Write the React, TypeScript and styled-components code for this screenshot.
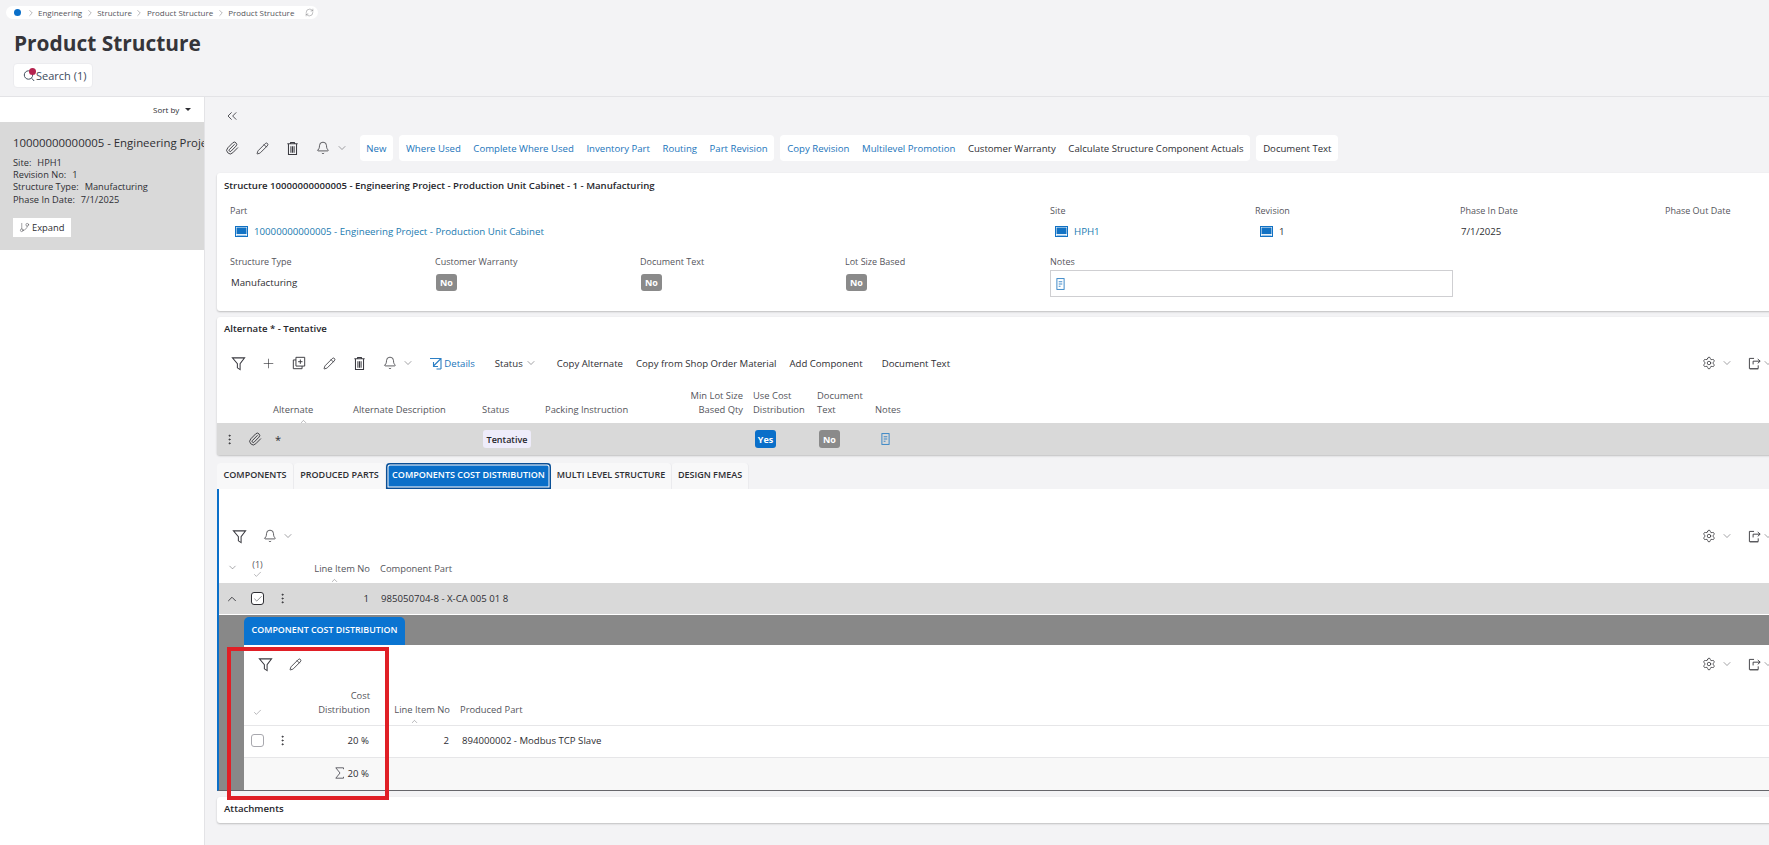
import React from "react";
import styled, { createGlobalStyle } from "styled-components";
import { ChevronDown, ChevronRight, ChevronUp, ChevronsLeft, EllipsisVertical, Paperclip, Pencil, Plus, Settings, Bell, Check, RefreshCw, GitBranch } from "lucide-react";

const GlobalStyle = createGlobalStyle`
  html, body { margin: 0; padding: 0; background: #f3f3f5; }
  body { font-family: "Open Sans", "Liberation Sans", sans-serif; color: #2e2e33; }
`;

/* ---- drawings ---- */
const Funnel = () => (
  <svg width="15" height="15" viewBox="0 0 16 16" fill="none" stroke="#3a3a40" strokeWidth="1.1">
    <path d="M1.5 2h13L9.7 8.2v6.3L6.8 12.6V8.2z" />
  </svg>
);

const Trash = () => (
  <svg width="15" height="15" viewBox="0 0 16 16" fill="none" stroke="#3a3a40" strokeWidth="1.1">
    <path d="M2.5 3h11M6 3V1.5h4V3M3.7 3v11.5h8.6V3M6.3 5.5v7M8 5.5v7M9.7 5.5v7" />
  </svg>
);

const Duplicate = () => (
  <svg width="14" height="14" viewBox="0 0 16 16" fill="none" stroke="#3a3a40" strokeWidth="1.1">
    <path d="M4.5 1.5h10v10h-10zM4.5 4.5h-3v10h10v-3M9.5 4v5M7 6.5h5" />
  </svg>
);

const ShareOut = () => (
  <svg width="13" height="13" viewBox="0 0 14 14" fill="none" stroke="#3a3a40" strokeWidth="1">
    <path d="M6.5 1.5h-5v11h9.5V9" />
    <path d="M5.5 8V4.5h7.5M10.5 2.2l2.6 2.3-2.6 2.3" />
    <path d="M2 13.5h9" stroke="#aaa" />
  </svg>
);

const ScreenLink = () => (
  <svg width="13" height="11" viewBox="0 0 13 11">
    <rect x="0.5" y="0.5" width="12" height="10" fill="#fff" stroke="#1272c4" />
    <rect x="1.5" y="1.5" width="10" height="6.5" fill="#1272c4" />
    <rect x="1.5" y="8.8" width="10" height="1" fill="#7fb4e2" />
  </svg>
);

const NoteDoc = () => (
  <svg width="9" height="12" viewBox="0 0 10 13" fill="none" stroke="#2c7fc4">
    <rect x="1" y="0.5" width="8" height="12" />
    <path d="M3 4h4M3 6.5h4M3 9h2" />
  </svg>
);

const OpenLink = () => (
  <svg width="13" height="13" viewBox="0 0 13 13" fill="none" stroke="#2c7fc4" strokeWidth="1.1">
    <path d="M1 1.5h4M12 12V1.5H5M11.5 2L4.5 9M4.5 5v4.5H9M12 12H7.5" />
  </svg>
);

const Sigma = () => (
  <svg width="9" height="12" viewBox="0 0 9 12" fill="none" stroke="#55555c" strokeWidth="0.9">
    <path d="M8.5 2.2V.8H.8L5 6 .8 11.2h7.7V9.8" />
  </svg>
);

const SearchMark = () => (
  <SearchIcon>
    <svg width="12" height="13" viewBox="0 0 12 13" fill="none" stroke="#44505e" strokeWidth="1">
      <circle cx="5.5" cy="6" r="4.2" />
      <path d="M8.6 9.2l2.6 2.8" />
    </svg>
    <Dot />
  </SearchIcon>
);

/* ---- page frame ---- */
const Page = styled.div`
  width: 1769px;
  height: 845px;
  overflow: hidden;
  display: flex;
  flex-direction: column;
`;

const Header = styled.header`
  height: 97px;
  flex: none;
  padding: 6px 0 0 6px;
  box-sizing: border-box;
  border-bottom: 1px solid #e3e3e6;
`;

const Breadcrumb = styled.nav`
  height: 13px;
  width: 312px;
  box-sizing: border-box;
  padding-left: 8px;
  background: #fff;
  border-radius: 7px;
  display: flex;
  align-items: center;
  font-size: 8px;
  color: #55555c;
  svg { flex: none; }
`;

const Crumb = styled.span`
  white-space: nowrap;
`;

const CrumbDot = styled.span`
  width: 7px;
  height: 7px;
  flex: none;
  border-radius: 50%;
  background: #0a6fc9;
  margin-right: 2px;
`;

const Title = styled.h1`
  margin: 10px 0 0 8px;
  font-size: 20.9px;
  line-height: 28px;
  font-weight: 700;
  color: #35353a;
`;

const SearchButton = styled.button`
  margin: 6px 0 0 7px;
  width: 80px;
  height: 25px;
  padding: 0 0 0 9px;
  border: 1px solid #ececef;
  border-radius: 4px;
  background: #fff;
  display: flex;
  align-items: center;
  white-space: nowrap;
  font: 400 11px "Open Sans", sans-serif;
  color: #3c4a5c;
`;

const SearchIcon = styled.span`
  position: relative;
  width: 13px;
  height: 14px;
  flex: none;
  display: inline-flex;
`;

const Dot = styled.span`
  position: absolute;
  top: -1px;
  left: 6px;
  width: 7px;
  height: 7px;
  border-radius: 50%;
  background: #b5234f;
`;

const Body = styled.div`
  flex: 1;
  min-height: 0;
  display: flex;
`;

/* ---- left list ---- */
const Sidebar = styled.aside`
  width: 205px;
  flex: none;
  background: #fff;
  border-right: 1px solid #e3e3e6;
  box-sizing: border-box;
  overflow: hidden;
`;

const SortRow = styled.div`
  height: 25px;
  padding: 6px 8px 0 0;
  box-sizing: border-box;
  display: flex;
  justify-content: flex-end;
`;

const SortBy = styled.span`
  width: 49px;
  height: 13px;
  font-size: 8px;
  line-height: 12px;
  padding-left: 6px;
  box-sizing: border-box;
  display: flex;
  align-items: center;
  gap: 6px;
  &::after {
    content: "";
    border-left: 3px solid transparent;
    border-right: 3px solid transparent;
    border-top: 3.5px solid #2e2e33;
  }
`;

const ListItem = styled.div`
  height: 128px;
  background: #d9d9d9;
  padding: 13px 0 0 13px;
  box-sizing: border-box;
`;

const ItemTitle = styled.div`
  font-size: 11.4px;
  line-height: 16px;
  white-space: nowrap;
  margin-bottom: 6px;
`;

const ItemLine = styled.div`
  font-size: 9.25px;
  line-height: 12.2px;
  white-space: nowrap;
  span { margin-left: 6px; }
`;

const ExpandButton = styled.div`
  width: 58px;
  height: 19px;
  margin-top: 12px;
  background: #fff;
  display: flex;
  align-items: center;
  gap: 2px;
  padding-left: 6px;
  box-sizing: border-box;
  font-size: 9.4px;
`;

/* ---- main column ---- */
const Main = styled.main`
  flex: 1;
  min-width: 0;
  padding-left: 12px;
  overflow: hidden;
`;

const CollapseRow = styled.div`
  height: 38px;
  display: flex;
  align-items: center;
  padding: 0 0 1px 7px;
  box-sizing: border-box;
`;

const MainToolbar = styled.div`
  height: 26px;
  display: flex;
  align-items: stretch;
  white-space: nowrap;
`;

const IconSlot = styled.span`
  width: 30.4px;
  flex: none;
  display: inline-flex;
  align-items: center;
  justify-content: center;
`;

const ChevronSlot = styled.span<{ $pull?: number }>`
  width: 14px;
  flex: none;
  display: inline-flex;
  align-items: center;
  justify-content: center;
  margin-left: ${(p) => p.$pull ?? -4}px;
`;

const ToolGroup = styled.div<{ $ml?: number }>`
  background: #fff;
  border-radius: 4px;
  display: flex;
  align-items: center;
  padding: 0 0.5px;
  margin-left: ${(p) => p.$ml ?? 6}px;
`;

const ToolLink = styled.span<{ $plain?: boolean }>`
  font-size: 9.6px;
  padding: 0 6.3px;
  color: ${(p) => (p.$plain ? "#2e2e33" : "#1b75bb")};
`;

const Card = styled.section<{ $mt?: number; $h: number }>`
  margin: ${(p) => p.$mt ?? 6}px -20px 0 0;
  height: ${(p) => p.$h}px;
  background: #fff;
  border-radius: 3px;
  box-shadow: 0 1px 2px rgba(0, 0, 0, 0.22);
  position: relative;
`;

const CardTitle = styled.h2<{ $top?: number }>`
  margin: 0;
  padding: ${(p) => p.$top ?? 6}px 0 0 7px;
  height: 20px;
  box-sizing: border-box;
  font-size: 9.6px;
  line-height: 14px;
  font-weight: 600;
  color: #26262b;
`;

const FieldGrid = styled.div`
  margin-top: 11px;
  padding-left: 13px;
  display: grid;
  grid-template-columns: repeat(8, 205px);
  row-gap: 14px;
`;

const Field = styled.div<{ $span?: number }>`
  grid-column: span ${(p) => p.$span ?? 1};
  min-width: 0;
`;

const FieldLabel = styled.div`
  font-size: 9px;
  line-height: 14px;
  color: #55555c;
  white-space: nowrap;
`;

const FieldValue = styled.div<{ $tall?: boolean; $plain?: boolean }>`
  height: ${(p) => (p.$tall ? 27 : 20)}px;
  margin-top: ${(p) => (p.$tall ? 1 : 3)}px;
  padding-left: ${(p) => (p.$tall || p.$plain ? 1 : 5)}px;
  display: flex;
  align-items: center;
  gap: 6px;
  font-size: 9.7px;
  white-space: nowrap;
  & > span { margin-bottom: ${(p) => (p.$tall ? 2 : 0)}px; }
`;

const LinkText = styled.span`
  color: #1a7ab0;
`;

const Badge = styled.span<{ $kind: "no" | "yes" | "status" }>`
  height: 17.5px;
  padding: 0 ${(p) => (p.$kind === "status" ? 5 : 0)}px;
  width: ${(p) => (p.$kind === "status" ? "48px" : "21px")};
  box-sizing: border-box;
  border-radius: 3px;
  display: inline-flex;
  align-items: center;
  justify-content: center;
  font-size: 9px;
  font-weight: ${(p) => (p.$kind === "status" ? 600 : 700)};
  color: ${(p) => (p.$kind === "status" ? "#26262b" : "#fff")};
  background: ${(p) => ({ no: "#8a8a8a", yes: "#0a6fc9", status: "#eeecfa" })[p.$kind]};
`;

const NotesInput = styled.div`
  width: 403px;
  height: 27px;
  margin-left: -1px;
  box-sizing: border-box;
  border: 1px solid #cfcfd2;
  display: flex;
  align-items: center;
  padding-left: 5px;
`;

const Toolbar = styled.div<{ $left?: number; $mt?: number }>`
  height: 30px;
  margin-top: ${(p) => p.$mt ?? 0}px;
  display: flex;
  align-items: center;
  padding: 0 0 0 ${(p) => p.$left ?? 6}px;
  white-space: nowrap;
`;

const ToolText = styled.span<{ $blue?: boolean; $ml?: number }>`
  font-size: 9.6px;
  margin-left: ${(p) => p.$ml ?? 0}px;
  color: ${(p) => (p.$blue ? "#1b75bb" : "#2e2e33")};
  display: inline-flex;
  align-items: center;
  gap: 2px;
`;

const RightTools = styled.div`
  margin-left: auto;
  margin-right: 6px;
  display: flex;
  align-items: center;
  width: 81px;
  flex: none;
  gap: 5px;
`;

const ShareSlot = styled.span`
  display: inline-flex;
  margin: 0 -4px 0 10px;
`;

/* ---- tables ---- */
const HeaderRow = styled.div<{ $cols: string; $h: number; $pb?: number }>`
  height: ${(p) => p.$h}px;
  display: grid;
  grid-template-columns: ${(p) => p.$cols};
  align-items: end;
  padding-bottom: ${(p) => p.$pb ?? 7}px;
  box-sizing: border-box;
`;

const HeadCell = styled.div<{ $right?: boolean }>`
  position: relative;
  font-size: 9.4px;
  line-height: 14px;
  color: #55555c;
  text-align: ${(p) => (p.$right ? "right" : "left")};
  padding: 0 ${(p) => (p.$right ? 5 : 0)}px 0 ${(p) => (p.$right ? 0 : 5)}px;
  white-space: nowrap;
`;

const SortCaret = styled.span<{ $x: number }>`
  position: absolute;
  left: ${(p) => p.$x}px;
  bottom: -9px;
  display: flex;
`;

const Row = styled.div<{ $cols: string; $h: number; $bg?: string; $line?: boolean; $up?: number }>`
  height: ${(p) => p.$h}px;
  display: grid;
  grid-template-columns: ${(p) => p.$cols};
  align-items: center;
  box-sizing: border-box;
  padding-bottom: ${(p) => p.$up ?? 0}px;
  background: ${(p) => p.$bg ?? "transparent"};
  border-top: ${(p) => (p.$line ? "1px solid #e6e6e8" : "none")};
`;

const Cell = styled.div<{ $right?: boolean; $center?: boolean; $left?: number }>`
  font-size: 9.6px;
  white-space: nowrap;
  display: flex;
  align-items: center;
  justify-content: ${(p) => (p.$right ? "flex-end" : p.$center ? "center" : "flex-start")};
  padding: 0 ${(p) => (p.$right ? 6 : 0)}px 0 ${(p) => (p.$right || p.$center ? 0 : p.$left ?? 7)}px;
`;

const MenuCell = styled(Cell)`
  gap: 12px;
`;

const SumCell = styled(Cell)`
  gap: 4px;
`;

const Star = styled(Cell)`
  font-size: 11px;
`;

const SelectHead = styled.div<{ $drop?: number }>`
  display: flex;
  flex-direction: column;
  align-items: center;
  font-size: 9px;
  line-height: 11px;
  color: #55555c;
  margin-bottom: ${(p) => -(p.$drop ?? 0)}px;
`;

const Tabs = styled.div`
  margin-top: 8px;
  height: 26px;
  display: flex;
`;

const Tab = styled.div<{ $w: number; $active?: boolean }>`
  width: ${(p) => p.$w}px;
  box-sizing: border-box;
  display: flex;
  align-items: center;
  justify-content: center;
  padding-bottom: 3px;
  font-size: 9px;
  font-weight: 600;
  white-space: nowrap;
  border-radius: 4px 4px 0 0;
  color: ${(p) => (p.$active ? "#fff" : "#2e2e33")};
  background: ${(p) => (p.$active ? "#0a6fc9" : "#f8f8f9")};
  border-right: ${(p) => (p.$active ? "none" : "1px solid #ebebee")};
  box-shadow: ${(p) => (p.$active ? "inset 0 0 0 1.5px #0a4f96, inset 0 0 0 2.5px #fff" : "none")};
`;

const Panel = styled.div`
  height: 302px;
  margin-right: -20px;
  background: #fff;
  border-left: 2px solid #0a6fc9;
  border-bottom: 1px solid #66666b;
  box-sizing: border-box;
  padding-top: 32px;
`;

const Band = styled.div`
  height: 30px;
  margin-top: 1px;
  background: #888;
  padding: 2px 0 0 25px;
  box-sizing: border-box;
`;

const BandTab = styled.div`
  width: 161px;
  height: 28px;
  padding-bottom: 3px;
  box-sizing: border-box;
  background: #0a74d1;
  border-radius: 5px 5px 0 0;
  color: #fff;
  font-size: 8.9px;
  font-weight: 600;
  display: flex;
  align-items: center;
  justify-content: center;
  white-space: nowrap;
`;

const Nested = styled.div`
  height: 145px;
  background: #fff;
  margin-left: 25px;
  box-shadow: -25px 0 0 #888;
  padding-top: 4px;
  box-sizing: border-box;
`;

const CheckBox = styled.span<{ $on?: boolean }>`
  width: 13px;
  height: 13px;
  box-sizing: border-box;
  border-radius: 3px;
  border: 1px solid ${(p) => (p.$on ? "#2e2e33" : "#a8a8ae")};
  background: #fff;
  display: inline-flex;
  align-items: center;
  justify-content: center;
`;

const RedFrame = styled.div`
  position: absolute;
  left: 227px;
  top: 647px;
  width: 162px;
  height: 153px;
  box-sizing: border-box;
  border: 4px solid #e01f26;
  pointer-events: none;
`;

const Shell = styled.div`
  position: relative;
`;

const thin = { strokeWidth: 1.5, color: "#2e2e34" };
const tiny = { strokeWidth: 1, color: "#44444a" };

const altCols = "51px 80px 129px 63px 100px 108px 64px 58px 1fr";
const compCols = "26px 25px 25px 80px 1fr";
const prodCols = "26px 25px 80px 80px 1fr";

const Sep = () => <ChevronRight size={10} strokeWidth={1} color="#55555c" style={{ margin: "0 2.5px" }} />;

const GridTools = () => (
  <RightTools>
    <Settings size={14} strokeWidth={1.3} color="#2e2e34" />
    <ChevronDown size={12} {...tiny} />
    <ShareSlot><ShareOut /></ShareSlot>
    <ChevronDown size={12} {...tiny} />
  </RightTools>
);

const App = () => {
  return (
    <Shell>
      <GlobalStyle />
      <Page>
        <Header>
          <Breadcrumb>
            <CrumbDot />
            <Sep />
            <Crumb>Engineering</Crumb>
            <Sep />
            <Crumb>Structure</Crumb>
            <Sep />
            <Crumb>Product Structure</Crumb>
            <Sep />
            <Crumb>Product Structure</Crumb>
            <RefreshCw size={9} strokeWidth={1} color="#55555c" style={{ marginLeft: 11 }} />
          </Breadcrumb>
          <Title>Product Structure</Title>
          <SearchButton>
            <SearchMark />
            Search (1)
          </SearchButton>
        </Header>
        <Body>
          <Sidebar>
            <SortRow>
              <SortBy>Sort by</SortBy>
            </SortRow>
            <ListItem>
              <ItemTitle>10000000000005 - Engineering Project - Production Unit Cabinet</ItemTitle>
              <ItemLine>Site:<span>HPH1</span></ItemLine>
              <ItemLine>Revision No:<span>1</span></ItemLine>
              <ItemLine>Structure Type:<span>Manufacturing</span></ItemLine>
              <ItemLine>Phase In Date:<span>7/1/2025</span></ItemLine>
              <ExpandButton>
                <GitBranch size={11} strokeWidth={1} color="#3a3a40" />
                Expand
              </ExpandButton>
            </ListItem>
          </Sidebar>
          <Main>
            <CollapseRow>
              <ChevronsLeft size={16} strokeWidth={1.3} color="#3a3a40" />
            </CollapseRow>
            <MainToolbar>
              <IconSlot><Paperclip size={14} {...thin} /></IconSlot>
              <IconSlot><Pencil size={13} {...thin} /></IconSlot>
              <IconSlot><Trash /></IconSlot>
              <IconSlot><Bell size={14} strokeWidth={1.3} color="#2e2e34" /></IconSlot>
              <ChevronSlot><ChevronDown size={12} {...tiny} /></ChevronSlot>
              <ToolGroup $ml={11}><ToolLink>New</ToolLink></ToolGroup>
              <ToolGroup>
                <ToolLink>Where Used</ToolLink>
                <ToolLink>Complete Where Used</ToolLink>
                <ToolLink>Inventory Part</ToolLink>
                <ToolLink>Routing</ToolLink>
                <ToolLink>Part Revision</ToolLink>
              </ToolGroup>
              <ToolGroup>
                <ToolLink>Copy Revision</ToolLink>
                <ToolLink>Multilevel Promotion</ToolLink>
                <ToolLink $plain>Customer Warranty</ToolLink>
                <ToolLink $plain>Calculate Structure Component Actuals</ToolLink>
              </ToolGroup>
              <ToolGroup><ToolLink $plain>Document Text</ToolLink></ToolGroup>
            </MainToolbar>

            <Card $mt={12} $h={138}>
              <CardTitle>Structure 10000000000005 - Engineering Project - Production Unit Cabinet - 1 - Manufacturing</CardTitle>
              <FieldGrid>
                <Field $span={4}>
                  <FieldLabel>Part</FieldLabel>
                  <FieldValue><ScreenLink /><LinkText>10000000000005 - Engineering Project - Production Unit Cabinet</LinkText></FieldValue>
                </Field>
                <Field>
                  <FieldLabel>Site</FieldLabel>
                  <FieldValue><ScreenLink /><LinkText>HPH1</LinkText></FieldValue>
                </Field>
                <Field>
                  <FieldLabel>Revision</FieldLabel>
                  <FieldValue><ScreenLink /><span>1</span></FieldValue>
                </Field>
                <Field>
                  <FieldLabel>Phase In Date</FieldLabel>
                  <FieldValue $plain>7/1/2025</FieldValue>
                </Field>
                <Field>
                  <FieldLabel>Phase Out Date</FieldLabel>
                </Field>
                <Field>
                  <FieldLabel>Structure Type</FieldLabel>
                  <FieldValue $tall><span>Manufacturing</span></FieldValue>
                </Field>
                <Field>
                  <FieldLabel>Customer Warranty</FieldLabel>
                  <FieldValue $tall><Badge $kind="no">No</Badge></FieldValue>
                </Field>
                <Field>
                  <FieldLabel>Document Text</FieldLabel>
                  <FieldValue $tall><Badge $kind="no">No</Badge></FieldValue>
                </Field>
                <Field>
                  <FieldLabel>Lot Size Based</FieldLabel>
                  <FieldValue $tall><Badge $kind="no">No</Badge></FieldValue>
                </Field>
                <Field $span={2}>
                  <FieldLabel>Notes</FieldLabel>
                  <FieldValue $tall><NotesInput><NoteDoc /></NotesInput></FieldValue>
                </Field>
              </FieldGrid>
            </Card>

            <Card $h={138}>
              <CardTitle $top={5}>Alternate * - Tentative</CardTitle>
              <Toolbar $mt={11}>
                <IconSlot><Funnel /></IconSlot>
                <IconSlot><Plus size={15} strokeWidth={1} color="#2e2e34" /></IconSlot>
                <IconSlot><Duplicate /></IconSlot>
                <IconSlot><Pencil size={13} {...thin} /></IconSlot>
                <IconSlot><Trash /></IconSlot>
                <IconSlot><Bell size={14} strokeWidth={1.3} color="#2e2e34" /></IconSlot>
                <ChevronSlot><ChevronDown size={12} {...tiny} /></ChevronSlot>
                <ToolText $blue $ml={14}><OpenLink />Details</ToolText>
                <ToolText $ml={20}>Status<ChevronDown size={12} {...tiny} /></ToolText>
                <ToolText $ml={20}>Copy Alternate</ToolText>
                <ToolText $ml={13}>Copy from Shop Order Material</ToolText>
                <ToolText $ml={13}>Add Component</ToolText>
                <ToolText $ml={19}>Document Text</ToolText>
                <GridTools />
              </Toolbar>
              <HeaderRow $cols={altCols} $h={45} $pb={6}>
                <span />
                <HeadCell>Alternate<SortCaret $x={31}><ChevronUp size={9} {...tiny} /></SortCaret></HeadCell>
                <HeadCell>Alternate Description</HeadCell>
                <HeadCell>Status</HeadCell>
                <HeadCell>Packing Instruction</HeadCell>
                <HeadCell $right>Min Lot Size<br />Based Qty</HeadCell>
                <HeadCell>Use Cost<br />Distribution</HeadCell>
                <HeadCell>Document<br />Text</HeadCell>
                <HeadCell>Notes</HeadCell>
              </HeaderRow>
              <Row $cols={altCols} $h={32} $bg="#d9d9d9">
                <MenuCell $left={6}>
                  <EllipsisVertical size={13} strokeWidth={1.6} color="#2e2e33" />
                  <Paperclip size={14} {...thin} />
                </MenuCell>
                <Star $left={7}>*</Star>
                <span />
                <Cell $left={6}><Badge $kind="status">Tentative</Badge></Cell>
                <span />
                <span />
                <Cell><Badge $kind="yes">Yes</Badge></Cell>
                <Cell><Badge $kind="no">No</Badge></Cell>
                <Cell $left={11}><NoteDoc /></Cell>
              </Row>
            </Card>

            <Tabs>
              <Tab $w={77}>COMPONENTS</Tab>
              <Tab $w={92}>PRODUCED PARTS</Tab>
              <Tab $w={165} $active>COMPONENTS COST DISTRIBUTION</Tab>
              <Tab $w={121}>MULTI LEVEL STRUCTURE</Tab>
              <Tab $w={77}>DESIGN FMEAS</Tab>
            </Tabs>
            <Panel>
              <Toolbar $left={5}>
                <IconSlot><Funnel /></IconSlot>
                <IconSlot><Bell size={14} strokeWidth={1.3} color="#2e2e34" /></IconSlot>
                <ChevronSlot><ChevronDown size={12} {...tiny} /></ChevronSlot>
                <GridTools />
              </Toolbar>
              <HeaderRow $cols={compCols} $h={32}>
                <SelectHead $drop={-3}><ChevronDown size={11} {...tiny} /></SelectHead>
                <SelectHead $drop={3}>(1)<Check size={9} {...tiny} /></SelectHead>
                <span />
                <HeadCell $right>Line Item No<SortCaret $x={35}><ChevronUp size={9} {...tiny} /></SortCaret></HeadCell>
                <HeadCell>Component Part</HeadCell>
              </HeaderRow>
              <Row $cols={compCols} $h={31} $bg="#d9d9d9">
                <Cell $center><ChevronUp size={14} {...thin} /></Cell>
                <Cell $center><CheckBox $on><Check size={10} strokeWidth={1.3} color="#2e2e33" /></CheckBox></Cell>
                <Cell $center><EllipsisVertical size={13} strokeWidth={1.6} color="#2e2e33" /></Cell>
                <Cell $right>1</Cell>
                <Cell $left={6}>985050704-8 - X-CA 005 01 8</Cell>
              </Row>
              <Band>
                <BandTab>COMPONENT COST DISTRIBUTION</BandTab>
              </Band>
              <Nested>
                <Toolbar $left={6}>
                  <IconSlot><Funnel /></IconSlot>
                  <IconSlot><Pencil size={13} {...thin} /></IconSlot>
                  <GridTools />
                </Toolbar>
                <HeaderRow $cols={prodCols} $h={46} $pb={8}>
                  <SelectHead><Check size={9} {...tiny} /></SelectHead>
                  <span />
                  <HeadCell $right>Cost<br />Distribution</HeadCell>
                  <HeadCell $right>Line Item No<SortCaret $x={35}><ChevronUp size={9} {...tiny} /></SortCaret></HeadCell>
                  <HeadCell>Produced Part</HeadCell>
                </HeaderRow>
                <Row $cols={prodCols} $h={32} $line $up={2}>
                  <Cell $center><CheckBox /></Cell>
                  <Cell $center><EllipsisVertical size={13} strokeWidth={1.6} color="#2e2e33" /></Cell>
                  <Cell $right>20 %</Cell>
                  <Cell $right>2</Cell>
                  <Cell>894000002 - Modbus TCP Slave</Cell>
                </Row>
                <Row $cols={prodCols} $h={33} $line $bg="#f8f8f8" $up={2}>
                  <span />
                  <span />
                  <SumCell $right><Sigma />20 %</SumCell>
                  <span />
                  <span />
                </Row>
              </Nested>
            </Panel>
            <Card $h={26}>
              <CardTitle $top={5}>Attachments</CardTitle>
            </Card>
          </Main>
        </Body>
      </Page>
      <RedFrame />
    </Shell>
  );
};

export default App;
